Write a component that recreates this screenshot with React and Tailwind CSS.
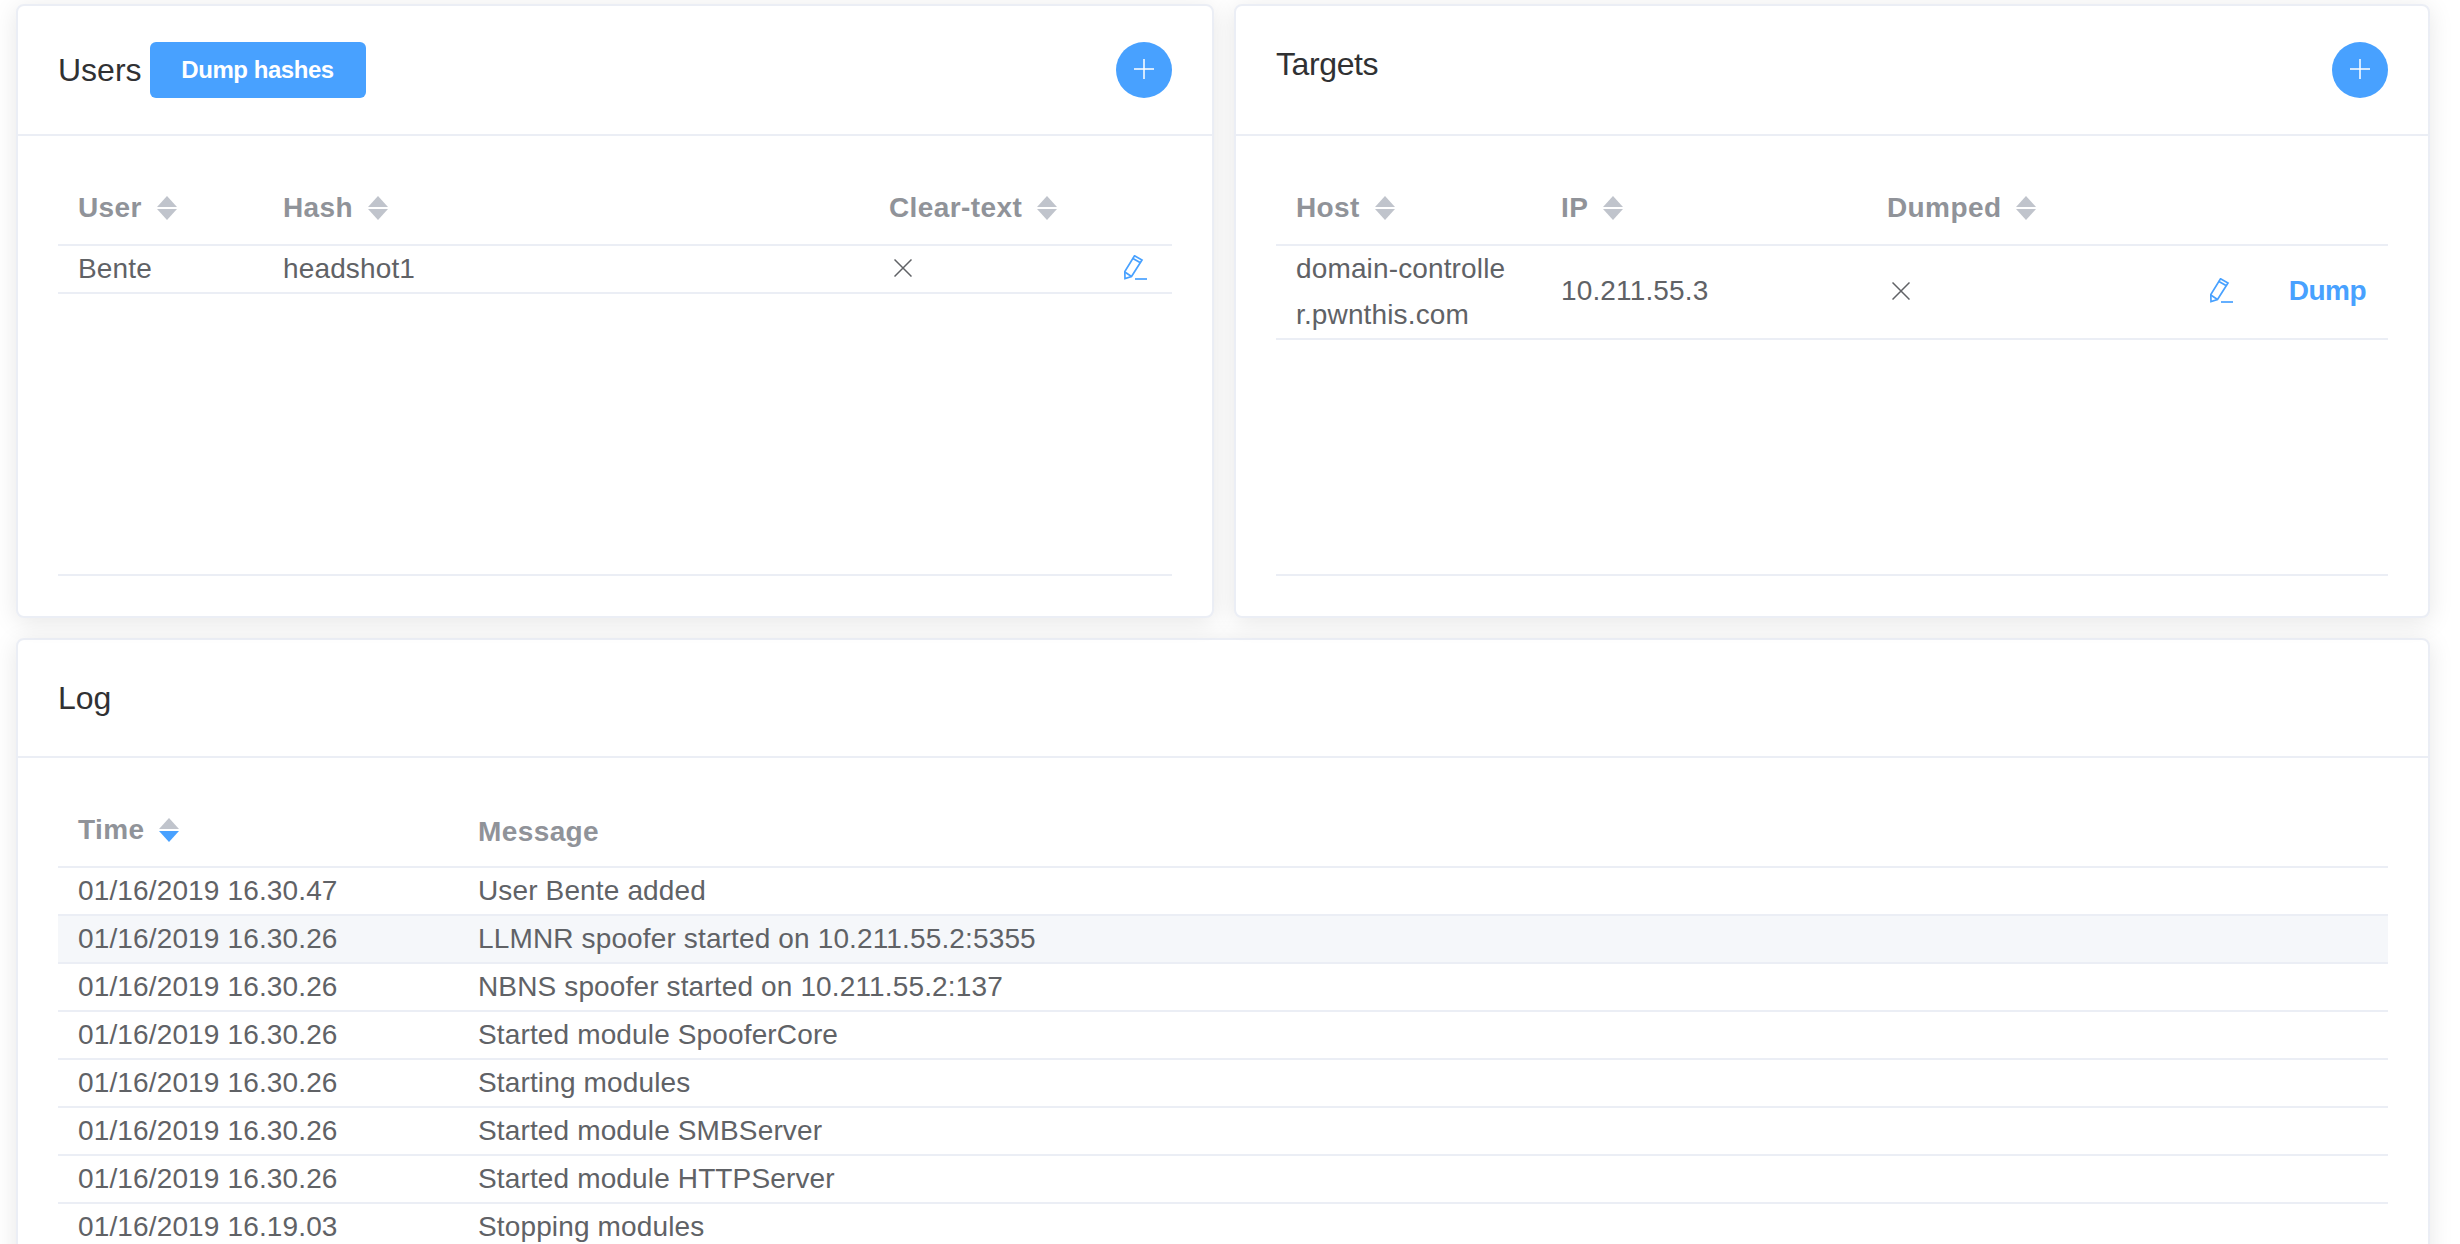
const SortIcon = ({ active }) => (
  <span className="ml-[15px] inline-flex w-[20px] flex-col gap-[2px] shrink-0">
    <span className="h-0 w-0 border-x-[10px] border-b-[11px] border-x-transparent border-b-[#c0c4cc]" />
    <span className={active ? "h-0 w-0 border-x-[10px] border-t-[11px] border-x-transparent border-t-[#48a1ff]" : "h-0 w-0 border-x-[10px] border-t-[11px] border-x-transparent border-t-[#c0c4cc]"} />
  </span>
);

const Head = ({ label, sort = true, active = false }) => (
  <div className={sort ? "flex items-center pl-5 pb-[4px]" : "flex items-center pl-5"}>
    <span className="font-bold tracking-[0.4px]">{label}</span>
    {sort && <SortIcon active={active} />}
  </div>
);

const Plus = () => (
  <button className="flex h-[56px] w-[56px] shrink-0 items-center justify-center rounded-full bg-[#48a1ff]">
    <svg width="20" height="20" viewBox="0 0 20 20" className="mb-[2px]">
      <path d="M10 0V20M0 10H20" stroke="#fff" strokeWidth="1.5" />
    </svg>
  </button>
);

const Cross = () => (
  <svg width="18" height="18" viewBox="0 0 18 18" className="mb-[3px] ml-[25px]">
    <path d="M0.5 0.5L17.5 17.5M17.5 0.5L0.5 17.5" stroke="#606266" strokeWidth="1.5" />
  </svg>
);

const Pencil = () => (
  <svg width="24" height="25" viewBox="0 0 24 25" fill="none" stroke="#48a1ff" strokeWidth="1.7" className="mb-[4px]">
    <path d="M10.5 0.8L18 5L7.5 21.5L1 23.5L0.8 16.5Z" />
    <path d="M8.5 3.2L16 7.6M0.8 17L7.5 21.5" />
    <path d="M11 24H23" />
  </svg>
);

const Card = ({ title, action, children, titleExtra, titleClass = "", className = "" }) => (
  <div className={`rounded-lg border-2 border-[#ebeef5] bg-white shadow-[0_4px_24px_rgba(0,0,0,0.1)] ${className}`}>
    <div className="flex items-start justify-between border-b-2 border-[#ebeef5] px-10 py-9">
      <div className="flex h-[44px] items-start text-[32px] leading-[44px] text-[#303133]">
        {titleExtra ? (
          <div className="flex h-[56px] items-center">
            <span>{title}</span>
            {titleExtra}
          </div>
        ) : (
          <span className={titleClass}>{title}</span>
        )}
      </div>
      {action}
    </div>
    <div className="p-10">{children}</div>
  </div>
);

const headRow = "grid h-[70px] items-center border-b-2 border-[#ebeef5] font-bold text-[#909399]";
const bodyRow = "grid items-center border-b-2 border-[#ebeef5] leading-[46px] tracking-[0.14px] text-[#606266]";

const logs = [
  ["01/16/2019 16.30.47", "User Bente added"],
  ["01/16/2019 16.30.26", "LLMNR spoofer started on 10.211.55.2:5355"],
  ["01/16/2019 16.30.26", "NBNS spoofer started on 10.211.55.2:137"],
  ["01/16/2019 16.30.26", "Started module SpooferCore"],
  ["01/16/2019 16.30.26", "Starting modules"],
  ["01/16/2019 16.30.26", "Started module SMBServer"],
  ["01/16/2019 16.30.26", "Started module HTTPServer"],
  ["01/16/2019 16.19.03", "Stopping modules"],
];

export default function App() {
  return (
    <div className="h-[1244px] overflow-hidden bg-white pl-4 pr-[30px] pt-1 text-[28px] font-['Liberation_Sans',Arial,sans-serif]">
      <div className="grid grid-cols-[1198px_1fr] gap-5">
        <Card
          title="Users"
          titleExtra={
            <button className="ml-[8px] h-[56px] w-[216px] rounded-[6px] bg-[#48a1ff] text-[24px] font-bold tracking-[-0.45px] text-white">
              Dump hashes
            </button>
          }
          action={<Plus />}
        >
          <div className="h-[400px] border-b-2 border-[#ebeef5]">
            <div className={`${headRow} grid-cols-[205px_606px_1fr]`}>
              <Head label="User" />
              <Head label="Hash" />
              <Head label="Clear-text" />
            </div>
            <div className={`${bodyRow} grid-cols-[205px_606px_1fr_auto]`}>
              <div className="pl-5">Bente</div>
              <div className="pl-5">headshot1</div>
              <div><Cross /></div>
              <div className="pr-6"><Pencil /></div>
            </div>
          </div>
        </Card>
        <Card title="Targets" titleClass="tracking-[-0.4px]" action={<Plus />}>
          <div className="h-[400px] border-b-2 border-[#ebeef5]">
            <div className={`${headRow} grid-cols-[265px_326px_1fr]`}>
              <Head label="Host" />
              <Head label="IP" />
              <Head label="Dumped" />
            </div>
            <div className={`${bodyRow} grid-cols-[265px_326px_1fr_auto]`}>
              <div className="break-all pl-5 pr-[29px]">domain-controller.pwnthis.com</div>
              <div className="mb-[3px] pl-5">10.211.55.3</div>
              <div><Cross /></div>
              <div className="flex items-center gap-[55px] pr-[22px]">
                <Pencil />
                <span className="mb-[3px] font-bold tracking-[-0.5px] text-[#48a1ff]">Dump</span>
              </div>
            </div>
          </div>
        </Card>
      </div>
      <Card title="Log" className="mt-5">
        <div>
          <div className={`${headRow} grid-cols-[400px_1fr]`}>
            <Head label="Time" active />
            <Head label="Message" sort={false} />
          </div>
          {logs.map(([time, message], i) => (
            <div key={i} className={`${bodyRow} grid-cols-[400px_1fr] ${i === 1 ? "bg-[#f5f7fa]" : ""}`}>
              <div className="pl-5">{time}</div>
              <div className="pl-5">{message}</div>
            </div>
          ))}
        </div>
      </Card>
    </div>
  );
}
